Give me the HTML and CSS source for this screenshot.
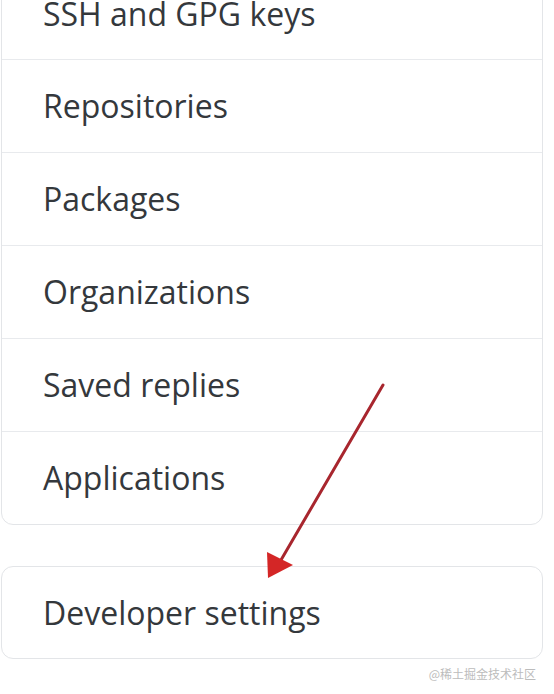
FILE: index.html
```html
<!DOCTYPE html>
<html>
<head>
<meta charset="utf-8">
<link rel="stylesheet" href="styles.css">
</head>
<body>
<div class="page">
  <nav class="menu menu-main">
    <a class="item">SSH and GPG keys</a>
    <a class="item">Repositories</a>
    <a class="item">Packages</a>
    <a class="item">Organizations</a>
    <a class="item">Saved replies</a>
    <a class="item">Applications</a>
  </nav>
  <nav class="menu menu-dev">
    <a class="item">Developer settings</a>
  </nav>
  <div class="mark">@稀土掘金技术社区</div>
  <svg class="arrow" width="554" height="694" viewBox="0 0 554 694">
    <line x1="383" y1="385" x2="281" y2="560" stroke="#a8262e" stroke-width="3" stroke-linecap="round"/>
    <polygon points="267,552 293,565 268,578" fill="#d42626"/>
  </svg>
</div>
</body>
</html>
```
FILE: styles.css
```css
html, body {
  margin: 0;
  padding: 0;
  background: #ffffff;
}
.page {
  position: relative;
  width: 554px;
  height: 694px;
  overflow: hidden;
  font-family: "Open Sans", "Noto Sans", sans-serif;
  color: #34383c;
}
.menu {
  display: flex;
  flex-direction: column;
  margin-left: 1px;
  width: 542px;
  border: 1px solid #e3e5e8;
  border-radius: 12px;
  box-sizing: border-box;
  background: #fff;
}
.menu-main {
  margin-top: -33px;
}
.menu-dev {
  margin-top: 41px;
}
.item {
  display: flex;
  align-items: center;
  height: 92px;
  padding-left: 41px;
  font-size: 32px;
  line-height: 1;
  border-top: 1px solid #e8eaed;
}
.item:first-child {
  border-top: none;
  height: 92px;
}
.menu-main .item:first-child {
  height: 91px;
}
.menu-dev .item {
  height: 91px;
}
.mark {
  display: flex;
  justify-content: flex-end;
  padding-right: 18px;
  margin-top: 6px;
  font-family: "Noto Sans CJK SC", sans-serif;
  font-size: 12px;
  color: #bcbcbc;
}
.arrow {
  position: absolute;
  left: 0;
  top: 0;
  pointer-events: none;
}
```
